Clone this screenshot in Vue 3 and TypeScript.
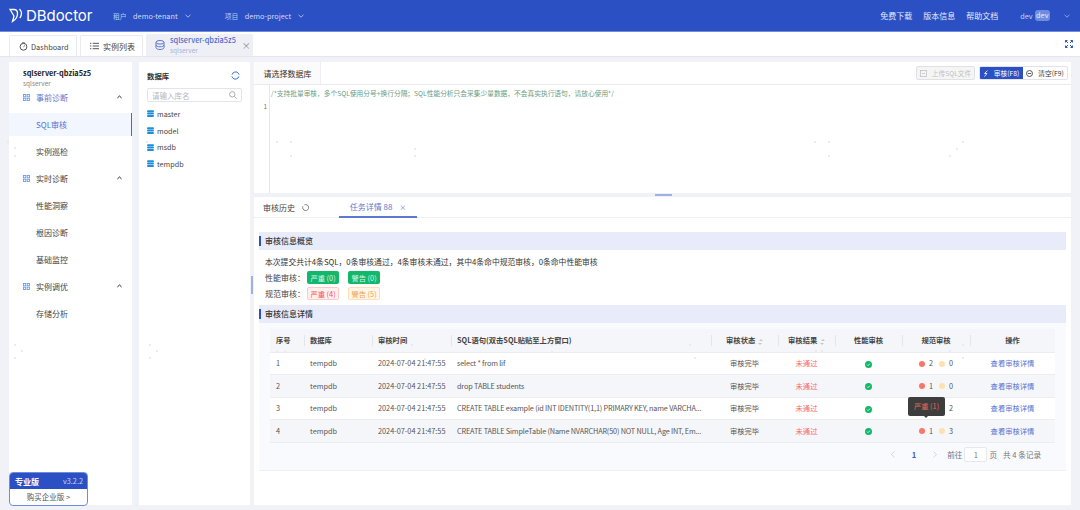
<script setup lang="ts">
interface Row { id: number; sql: string; err: number; warn: number; tip?: boolean }
const rows: Row[] = [
  { id: 1, sql: 'select * from lif', err: 2, warn: 0 },
  { id: 2, sql: 'drop TABLE students', err: 1, warn: 0 },
  { id: 3, sql: 'CREATE TABLE example (id INT IDENTITY(1,1) PRIMARY KEY, name VARCHA...', err: 1, warn: 2, tip: true },
  { id: 4, sql: 'CREATE TABLE SimpleTable (Name NVARCHAR(50) NOT NULL, Age INT, Em...', err: 1, warn: 3 },
]
const dbs = ['master', 'model', 'msdb', 'tempdb']
const menu = [
  { t: '事前诊断', group: true },
  { t: 'SQL审核', active: true },
  { t: '实例巡检' },
  { t: '实时诊断', group: true },
  { t: '性能洞察' },
  { t: '根因诊断' },
  { t: '基础监控' },
  { t: '实例调优', group: true },
  { t: '存储分析' },
]
const dots: [number, number][] = [
  [8, 142], [15, 148], [15, 156], [147, 142], [277, 142], [291, 142], [291, 156], [415, 149], [415, 156], [815, 142], [829, 142], [829, 156], [963, 142], [957, 149], [950, 156],
  [15, 345], [22, 351], [15, 358], [150, 345], [157, 351], [150, 358], [277, 352], [285, 352], [412, 345], [425, 359], [552, 345], [552, 352], [690, 345], [695, 358], [816, 351], [822, 351], [950, 351], [963, 345], [963, 358],
]
</script>

<template>
  <div class="page">
    <header class="top">
      <div class="logo">
        <svg width="14" height="15" viewBox="0 0 14 15" fill="none" stroke="#fff" stroke-width="1.300"><path d="M1 1.500h4c2.300 0 3.500 1.600 3.500 4 0 3.200-2 6.200-5 8L5 8 1 1.500Z" /><path d="M10.500 1c2.300 2.500 2.500 6 .3 9" /></svg>
        <span class="logo-text">DBdoctor</span>
      </div>
      <span class="lab first">租户</span><span class="val">demo-tenant</span>
      <svg class="chev" width="6" height="4" viewBox="0 0 6 4"><path d="M.5.800 3 3.200 5.500.8" fill="none" stroke="#c6d2f2" stroke-width=".8" /></svg>
      <span class="lab second">项目</span><span class="val">demo-project</span>
      <svg class="chev" width="6" height="4" viewBox="0 0 6 4"><path d="M.5.800 3 3.200 5.500.8" fill="none" stroke="#c6d2f2" stroke-width=".8" /></svg>
      <div class="top-right">
        <span>免费下载</span><span>版本信息</span><span>帮助文档</span>
        <span class="user">dev</span><span class="badge">dev</span>
        <svg class="chev-user" width="6" height="4" viewBox="0 0 6 4"><path d="M.5.800 3 3.200 5.500.8" fill="none" stroke="#a3b5ea" stroke-width=".8" /></svg>
      </div>
    </header>

    <nav class="tabs">
      <div class="tab t1">
        <svg width="9" height="9" viewBox="0 0 10 10" fill="none" stroke="#444" stroke-width="1"><circle cx="5" cy="5.300" r="3.800" /><path d="M5 5.300 6.500 4M3.500 1h3" /></svg>
        Dashboard
      </div>
      <div class="tab t2">
        <svg width="9" height="8" viewBox="0 0 10 8" stroke="#444" stroke-width="1"><path d="M0 1h1.500M3 1h7M0 4h1.500M3 4h7M0 7h1.500M3 7h7" /></svg>
        实例列表
      </div>
      <div class="tab t3">
        <svg width="10" height="10" viewBox="0 0 10 10" fill="none" stroke="#5d76cf" stroke-width="1"><ellipse cx="5" cy="2.300" rx="4" ry="1.800" /><path d="M1 2.300v5.400c0 1 1.800 1.800 4 1.800s4-.8 4-1.800V2.300M1 5c0 1 1.800 1.800 4 1.800S9 6 9 5" /></svg>
        <div class="t3-text"><b>sqlserver-qbzia5z5</b><i>sqlserver</i></div>
        <span class="close">×</span>
      </div>
      <svg class="full" width="8" height="8" viewBox="0 0 8 8" fill="none" stroke="#2f53c4" stroke-width="1"><path d="M.5 2.500v-2h2M5.500.5h2v2M7.500 5.500v2h-2M2.500 7.500h-2v-2M.5.500 3 3M7.500.5 5 3M7.500 7.500 5 5M.5 7.500 3 5" /></svg>
    </nav>

    <div class="body">
      <aside class="side">
        <div class="side-title">sqlserver-qbzia5z5</div>
        <div class="side-sub">sqlserver</div>
        <div v-for="m in menu" :key="m.t" class="mi" :class="{ group: m.group, on: m.active }">
          <svg v-if="m.group" width="7" height="7" viewBox="0 0 7 7" fill="none" stroke="#6d9af0" stroke-width=".9"><rect x=".5" y=".5" width="2.300" height="2.300" /><rect x="4.200" y=".5" width="2.300" height="2.300" /><rect x=".5" y="4.200" width="2.300" height="2.300" /><rect x="4.200" y="4.200" width="2.300" height="2.300" /></svg>
          <span>{{ m.t }}</span>
          <svg v-if="m.group" class="up" width="5" height="4" viewBox="0 0 5 4"><path d="M.4 3 2.500 1 4.600 3" fill="none" stroke="#222" stroke-width="1" /></svg>
        </div>
        <div class="promo">
          <div class="promo-h"><b>专业版</b><span>v3.2.2</span></div>
          <div class="promo-b">购买企业版 &gt;</div>
        </div>
      </aside>

      <section class="dbp">
        <div class="dbp-h">
          <b>数据库</b>
          <svg width="9" height="9" viewBox="0 0 10 10" fill="none" stroke="#2f6fd8" stroke-width="1.100"><path d="M1.200 4a4 4 0 0 1 7-1.500L9 4M8.800 6a4 4 0 0 1-7 1.500L1 6" /></svg>
        </div>
        <div class="search">
          <span>请输入库名</span>
          <svg width="8" height="8" viewBox="0 0 8 8" fill="none" stroke="#999" stroke-width=".8"><circle cx="3.300" cy="3.300" r="2.700" /><path d="m5.300 5.300 2.300 2.300" /></svg>
        </div>
        <div v-for="d in dbs" :key="d" class="db">
          <svg width="7" height="7" viewBox="0 0 7 7" fill="#1f8fd8"><rect y=".2" width="7" height="2" rx="1" /><rect y="2.600" width="7" height="2" rx="1" /><rect y="5" width="7" height="2" rx="1" /></svg>
          {{ d }}
        </div>
      </section>

      <div class="vhandle"></div>

      <main class="main">
        <section class="editor">
          <div class="ed-bar">
            <div class="ed-tab">请选择数据库</div>
            <div class="btns">
              <span class="btn-up">
                <svg width="7" height="7" viewBox="0 0 7 7" fill="none" stroke="#bbb" stroke-width=".7"><rect x=".4" y=".4" width="6.200" height="6.200" /><path d="M2 3.500h3" /></svg>
                上传SQL文件
              </span>
              <div class="btn-group">
                <span class="btn-main">
                  <svg width="6" height="7" viewBox="0 0 6 7" fill="none" stroke="#fff" stroke-width=".8"><path d="M4.500.5 1.500 3.500H4L1.500 6.500" /></svg>
                  审核(F8)
                </span>
                <span class="btn-clear">
                  <svg width="7" height="7" viewBox="0 0 7 7" fill="none" stroke="#333" stroke-width=".8"><circle cx="3.500" cy="3.500" r="3" /><path d="M1.800 3.500h3.400" /></svg>
                  清空(F9)
                </span>
              </div>
            </div>
          </div>
          <div class="ed-body">
            <div class="gutter">1</div>
            <div class="code">/*支持批量审核，多个SQL使用分号+换行分隔；SQL性能分析只会采集少量数据，不会真实执行语句，请放心使用*/</div>
          </div>
        </section>
        <div class="hhandle"><span></span></div>
        <section class="result">
          <div class="res-tabs">
            <span class="rt">审核历史</span>
            <svg class="rt-ref" width="7" height="7" viewBox="0 0 7 7" fill="none" stroke="#666" stroke-width=".8"><path d="M1 2.200a3 3 0 1 0 1.300-1.300" /></svg>
            <span class="rt-on">任务详情 88 <em>×</em></span>
          </div>
          <div class="sec-h first-sec">审核信息概览</div>
          <div class="sum">本次提交共计4条SQL，0条审核通过，4条审核未通过，其中4条命中规范审核，0条命中性能审核</div>
          <div class="tag-row">
            <span class="tl">性能审核：</span>
            <span class="tag green">严重 (0)</span><span class="tag green">警告 (0)</span>
          </div>
          <div class="tag-row r2">
            <span class="tl">规范审核：</span>
            <span class="tag red">严重 (4)</span><span class="tag orange">警告 (5)</span>
          </div>
          <div class="sec-h">审核信息详情</div>
          <div class="tbl-wrap">
            <table>
              <colgroup>
                <col class="w1" /><col class="w2" /><col class="w3" /><col class="w4" /><col class="w5" /><col class="w6" /><col class="w7" /><col class="w8" /><col class="w9" />
              </colgroup>
              <thead>
                <tr>
                  <th>序号</th><th>数据库</th><th>审核时间</th><th>SQL语句(双击SQL贴贴至上方窗口)</th>
                  <th class="c">审核状态 <i class="sort"></i></th><th class="c">审核结果 <i class="sort"></i></th>
                  <th class="c">性能审核</th><th class="c">规范审核</th><th class="c">操作</th>
                </tr>
              </thead>
              <tbody>
                <tr v-for="r in rows" :key="r.id">
                  <td>{{ r.id }}</td>
                  <td>tempdb</td>
                  <td>2024-07-04 21:47:55</td>
                  <td class="sql">{{ r.sql }}</td>
                  <td class="c">审核完毕</td>
                  <td class="c fail">未通过</td>
                  <td class="c">
                    <svg class="ok" width="7" height="7" viewBox="0 0 7 7"><circle cx="3.500" cy="3.500" r="3.500" fill="#12b76a" /><path d="m2 3.600 1 1 2-2" fill="none" stroke="#fff" stroke-width=".8" /></svg>
                  </td>
                  <td class="c spec">
                    <i class="dot e" :class="{ hide: r.tip }"></i><span class="n" :class="{ hide: r.tip }">{{ r.err }}</span><i class="dot w" :class="{ hide: r.tip }"></i><span class="n">{{ r.warn }}</span>
                    <div v-if="r.tip" class="tip">严重 (1)</div>
                  </td>
                  <td class="c link">查看审核详情</td>
                </tr>
              </tbody>
            </table>
            <div class="pager">
              <svg class="arr" width="4" height="7" viewBox="0 0 4 7"><path d="M3.500.5.500 3.500l3 3" fill="none" stroke="#c4c6cc" stroke-width=".7" /></svg>
              <b>1</b>
              <svg class="arr" width="4" height="7" viewBox="0 0 4 7"><path d="m.5.500 3 3-3 3" fill="none" stroke="#c4c6cc" stroke-width=".7" /></svg>
              <span class="go">前往</span><span class="pg-in">1</span><span>页</span>
              <span class="tot">共 4 条记录</span>
            </div>
          </div>
        </section>
      </main>
    </div>
    <svg class="noise" width="1080" height="510" viewBox="0 0 1080 510">
      <circle v-for="(d, i) in dots" :key="i" :cx="d[0]" :cy="d[1]" r="1" fill="#e4e6ea" />
    </svg>
  </div>
</template>

<style>
html, body { margin: 0; background: #f0f2f7; }
</style>

<style scoped>
.page { position: relative; width: 1080px; height: 510px; overflow: hidden; background: #f0f2f7; font-family: "Noto Sans CJK SC", "Noto Sans", sans-serif; font-size: 8px; color: #444; }
.noise { position: absolute; left: 0; top: 0; pointer-events: none; }
.top { height: 31px; background: #2b50c3; border-bottom: 1px solid #6f8be0; display: flex; align-items: center; color: #d3dcf5; box-sizing: content-box; }
.logo { display: flex; align-items: center; width: 113px; padding-left: 9px; box-sizing: border-box; gap: 3px; }
.logo-text { color: #fff; font-size: 15px; font-family: "Inter", sans-serif; font-weight: 400; line-height: 1; letter-spacing: -.05px; }
.lab { font-size: 6.800px; color: #b9c7ef; margin-right: 6.500px; }
.val { font-size: 7.300px; color: #d3dcf5; }
.chev { margin-left: 7px; }
.lab.second { margin-left: 34px; }
.top-right { margin-left: auto; display: flex; align-items: center; padding-right: 10px; gap: 11px; font-size: 8px; color: #e5eafa; }
.user { margin-left: 11px; color: #c6d2f2; font-size: 7.300px; }
.badge { margin-left: -9px; padding: 0 1.500px; height: 11px; line-height: 11px; background: #6f8bdf; border-radius: 3px; color: #e8edfb; font-size: 7.300px; }
.chev-user { margin-left: 3px; }

.tabs { height: 24px; background: #fff; border-bottom: 1px solid #e4e6ec; display: flex; align-items: flex-end; padding-left: 9px; gap: 3px; position: relative; }
.tab { height: 21px; border: 1px solid #e9ebf0; border-bottom: none; border-radius: 2px 2px 0 0; display: flex; align-items: center; box-sizing: border-box; font-size: 8px; color: #444; gap: 4px; }
.t1 { width: 68px; padding-left: 9px; font-size: 7.400px; gap: 3px; }
.t2 { width: 63px; padding-left: 9px; gap: 4px; }
.t3 { width: 107px; height: 22px; background: #eef0f6; border: none; padding-left: 9px; gap: 5px; }
.t3-text { display: flex; flex-direction: column; line-height: 10px; white-space: nowrap; }
.t3-text b { font-weight: 500; color: #4e6bc9; font-size: 7.350px; }
.t3-text i { font-style: normal; color: #a9b4d6; font-size: 6.500px; }
.close { color: #888; font-size: 9px; margin-left: 1px; }
.full { position: absolute; right: 7px; top: 8px; }

.body { display: flex; height: 449px; padding: 5px 9px 0; gap: 7px; }
.side { width: 123px; height: 443px; background: #fff; position: relative; flex: none; }
.side-title { font-weight: 700; color: #222; font-size: 7.350px; margin: 5px 0 0 14px; line-height: 11px; }
.side-sub { color: #888; font-size: 6.500px; margin: 0 0 -4px 14px; line-height: 10px; }
.mi { height: 27px; display: flex; align-items: center; padding-left: 27px; font-size: 8px; color: #444; box-sizing: border-box; position: relative; }
.mi.group { padding-left: 13.500px; gap: 6.500px; }
.mi.on { height: 23px; margin: 2px 0; background: #f2f6fe; border-right: 1px solid #4a68cc; color: #5572d0; }
.side-sub + .mi { color: #6077cf; }
.up { position: absolute; right: 10px; top: 11px; }
.promo { position: absolute; left: 0; bottom: -1px; width: 79px; height: 34px; border: 1px solid #6f8be0; border-radius: 4px; box-sizing: border-box; overflow: hidden; background: #fff; }
.promo-h { height: 16px; background: #2b50c3; display: flex; justify-content: space-between; align-items: center; padding: 0 4px 0 5px; }
.promo-h b { color: #fff; font-size: 8px; font-weight: 700; }
.promo-h span { color: #c6d2f2; font-size: 7.300px; }
.promo-b { text-align: center; font-size: 7.500px; color: #555; line-height: 16px; }

.dbp { width: 111px; height: 443px; background: #fff; flex: none; padding: 0 8px; box-sizing: border-box; }
.dbp-h { display: flex; justify-content: space-between; align-items: center; height: 26px; padding-right: 2px; }
.dbp-h b { font-weight: 700; color: #333; font-size: 7.400px; }
.search { height: 14px; border: 1px solid #e2e4e9; border-radius: 2px; box-sizing: border-box; display: flex; align-items: center; justify-content: space-between; padding: 0 4px; color: #b5b8bf; font-size: 7.500px; margin-bottom: 3.500px; }
.db { height: 16.700px; display: flex; align-items: center; gap: 3px; font-size: 7.200px; color: #444; }

.vhandle { position: relative; width: 0; margin: 0 -4px 0 -4px; }
.vhandle::after { content: ""; position: absolute; left: -2px; top: 214px; width: 2px; height: 18px; background: #9fb0e6; }
.main { width: 817px; margin-left: -2px; height: 443px; display: flex; flex-direction: column; flex: none; }
.editor { height: 131px; background: #fff; }
.ed-bar { height: 23px; border-bottom: 1px solid #e9ebf0; display: flex; justify-content: space-between; box-sizing: border-box; }
.ed-tab { width: 65px; margin-left: 1px; background: #fbfbfc; border-right: 1px solid #eeeff3; text-align: center; line-height: 23px; font-size: 8px; color: #333; }
.btns { display: flex; align-items: center; padding-right: 3px; gap: 4px; }
.btn-up { width: 59px; height: 14px; border: 1px solid #e0e1e4; border-radius: 2px; background: #f5f5f6; box-sizing: border-box; color: #c0c0c0; font-size: 6.700px; display: flex; align-items: center; justify-content: center; gap: 5px; }
.btn-group { display: flex; height: 14px; border: 1px solid #e0e3ee; border-radius: 2px; box-sizing: border-box; overflow: hidden; }
.btn-main { width: 44px; margin: -1px 0 -1px -1px; background: #2b50c3; color: #fff; font-size: 6.700px; display: flex; align-items: center; justify-content: center; gap: 5px; }
.btn-clear { width: 44px; color: #333; font-size: 6.700px; display: flex; align-items: center; justify-content: center; gap: 5px; }
.ed-body { display: flex; height: 108px; }
.gutter { width: 16px; border-right: 1px solid #e4e6ec; text-align: right; padding-right: 2px; box-sizing: border-box; padding-top: 16px; font-size: 6.500px; color: #777; }
.code { color: #6a9c84; font-size: 6.730px; padding: 3px 0 0 1px; line-height: 11px; }
.hhandle { height: 4px; position: relative; background: #f0f2f7; }
.hhandle span { position: absolute; left: 401px; top: 1px; width: 17px; height: 2px; background: #9fb0e6; }
.result { flex: 1; background: #fff; padding: 0 5px; min-height: 0; }
.res-tabs { height: 21px; margin: 0 -5px; border-bottom: 1px solid #eceef2; display: flex; align-items: center; position: relative; box-sizing: border-box; font-size: 8px; }
.rt { margin-left: 9px; color: #444; }
.rt-ref { margin-left: 7px; }
.rt-on { position: absolute; left: 85px; bottom: -1px; width: 78px; height: 21px; line-height: 20px; text-align: center; color: #6078cc; border-bottom: 2px solid #5c78d0; box-sizing: border-box; }
.rt-on em { font-style: normal; color: #6078cc; margin-left: 5px; font-size: 7px; }
.sec-h { height: 18px; background: #e8ecfa; line-height: 18px; padding-left: 6px; font-weight: 500; color: #333; font-size: 8px; position: relative; }
.sec-h::before { content: ""; position: absolute; left: 0; top: 4px; width: 2px; height: 10px; background: #2b50c3; }
.first-sec { margin-top: 14px; }
.sum { margin: 5px 0 0 6px; line-height: 14px; color: #333; font-size: 7.800px; }
.tag-row { display: flex; align-items: center; height: 13px; margin: 2px 0 0 6px; color: #444; font-size: 8px; }
.tag-row.r2 { margin-top: 3px; margin-bottom: 5px; }
.tl { width: 42px; }
.tag { width: 32px; height: 13px; line-height: 12px; border-radius: 2px; text-align: center; font-size: 7.300px; margin-right: 9px; box-sizing: border-box; border: 1px solid transparent; }
.green { background: #12b76a; color: #d8f5e6; }
.red { background: #fff0f0; border-color: #fdc9c9; color: #f0555a; }
.orange { background: #fff6ea; border-color: #fde0b8; color: #f5a04a; }
.tbl-wrap { background: #f9fafd; padding: 6px 11px 6px 11px; height: 148px; box-sizing: border-box; border-bottom: 1px solid #eef0f6; }
table { width: 785px; border-collapse: collapse; table-layout: fixed; background: #fff; font-size: 7.300px; color: #555; }
.w1 { width: 34px; } .w2 { width: 68px; } .w3 { width: 79px; } .w4 { width: 260px; } .w5 { width: 67px; } .w6 { width: 57px; } .w7 { width: 67px; } .w8 { width: 68px; } .w9 { width: 85px; }
th { height: 23px; background: #f5f6f9; text-align: left; padding: 0 0 0 6px; font-weight: 700; color: #444; position: relative; box-sizing: border-box; border-bottom: 1px solid #ebedf0; white-space: nowrap; }
th + th::before { content: ""; position: absolute; left: 0; top: 6px; width: 1px; height: 11px; background: #e3e5ea; }
td { height: 22.500px; padding: 0 0 0 6px; border-bottom: 1px solid #ebedf0; box-sizing: border-box; white-space: nowrap; position: relative; }
tbody tr:nth-child(even) td { background: #f5f6f9; }
.c { text-align: center; padding-left: 0; }
.sql { letter-spacing: -.17px; }
.fail { color: #f56c6c; }
.link { color: #5a74cf; }
.ok { vertical-align: middle; }
.sort { display: inline-block; width: 0; height: 0; margin-left: 2px; border: 2.500px solid transparent; border-bottom-color: #c2c5cc; vertical-align: 2px; position: relative; }
.sort::after { content: ""; position: absolute; left: -2.500px; top: 3.500px; border: 2.500px solid transparent; border-top-color: #c2c5cc; }
.spec { white-space: nowrap; }
.dot { display: inline-block; width: 6px; height: 6px; border-radius: 50%; vertical-align: -0.500px; }
.dot.e { background: #f8776a; }
.dot.w { background: #fde2ae; margin-left: 6px; }
.n { margin-left: 4px; }
.hide { visibility: hidden; }
.tip { position: absolute; left: 6px; top: -1px; width: 37px; height: 19px; background: #3d3d3d; border-radius: 2px; color: #e8695c; line-height: 18px; text-align: center; font-size: 7.300px; z-index: 2; }
.tip::after { content: ""; position: absolute; left: 16px; bottom: -2px; border: 2px solid transparent; border-top-color: #3d3d3d; border-bottom: none; }
.pager { height: 24px; display: flex; align-items: center; justify-content: flex-end; font-size: 7.600px; color: #777; padding-right: 14px; }
.pager b { color: #3c5bc8; margin: 0 17px 0 17px; font-weight: 700; }
.go { margin-left: 10px; }
.pg-in { width: 23px; height: 15px; line-height: 14px; border: 1px solid #e6e8ec; border-radius: 2px; background: #fff; text-align: center; margin: 0 2px; box-sizing: border-box; }
.tot { margin-left: 6px; }
</style>
